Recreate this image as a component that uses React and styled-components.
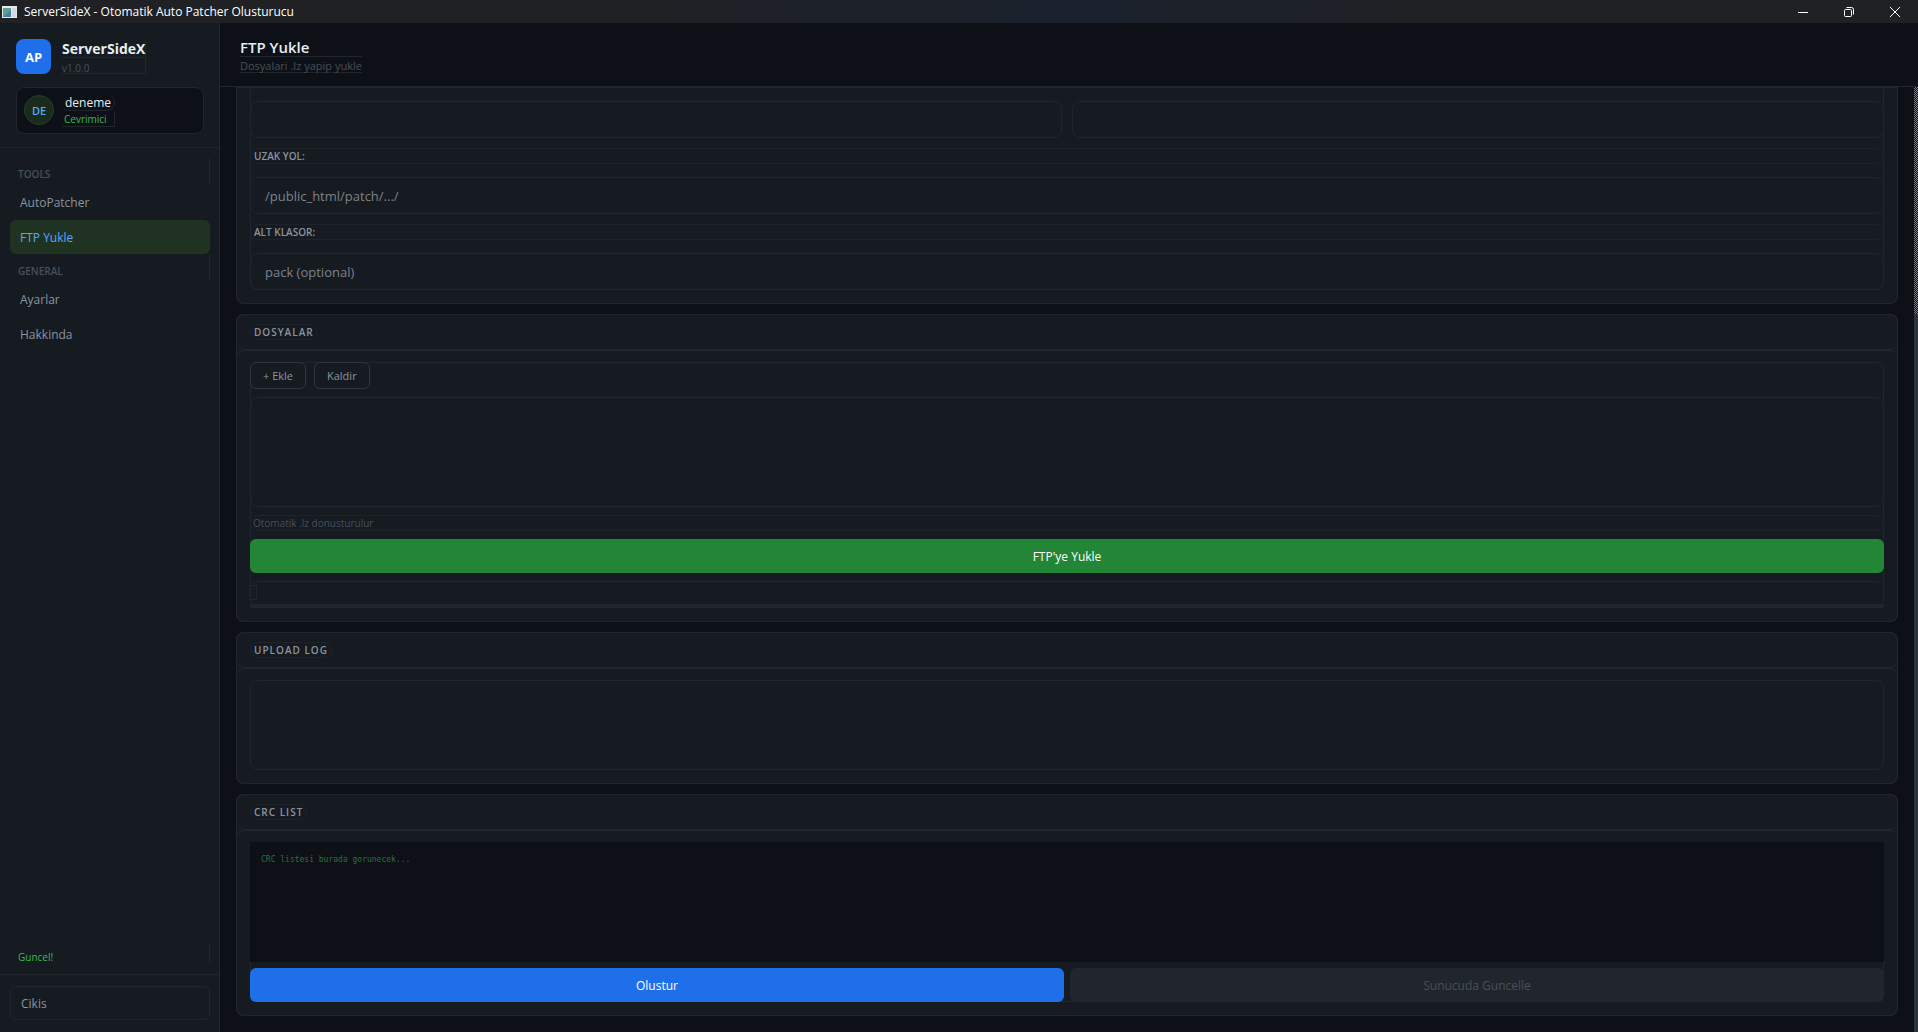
import React, { useState } from "react";
import styled, { createGlobalStyle } from "styled-components";

const line = "#21262d";

export default function App() {
    const [page, setPage] = useState("ftp");

    return (
        <Window>
            <GlobalStyle />
            <TitleBar>
                <AppIcon width="15" height="12" viewBox="0 0 15 12" aria-hidden="true">
                    <rect width="15" height="12" fill="#e6e8ea" />
                    <rect x="1" y="2" width="8" height="9" fill="#5f9f96" />
                    <path d="M1 11 L9 4 V11 Z" fill="#4a7fa5" />
                    <rect x="10" y="2" width="4" height="9" fill="#d5d9dd" />
                </AppIcon>
                <WindowTitle>ServerSideX - Otomatik Auto Patcher Olusturucu</WindowTitle>
                <WindowButton aria-label="Minimize">
                    <svg width="12" height="12" viewBox="0 0 12 12">
                        <path d="M1 6.5H11" />
                    </svg>
                </WindowButton>
                <WindowButton aria-label="Restore">
                    <svg width="12" height="12" viewBox="0 0 12 12">
                        <rect x="1.5" y="3.5" width="7" height="7" rx="1" />
                        <path d="M3.5 1.5H8.5Q10.5 1.5 10.5 3.5V8.5" />
                    </svg>
                </WindowButton>
                <WindowButton aria-label="Close">
                    <svg width="12" height="12" viewBox="0 0 12 12">
                        <path d="M1 1L11 11M11 1L1 11" />
                    </svg>
                </WindowButton>
            </TitleBar>

            <Body>
                <Sidebar>
                    <SidebarTop>
                        <Brand>
                            <Logo>AP</Logo>
                            <BrandText>
                                <BrandName>ServerSideX</BrandName>
                                <Version>v1.0.0</Version>
                            </BrandText>
                        </Brand>
                        <UserCard>
                            <Avatar>DE</Avatar>
                            <div>
                                <UserName>deneme</UserName>
                                <UserStatus>Cevrimici</UserStatus>
                            </div>
                        </UserCard>
                    </SidebarTop>
                    <Nav>
                        <NavTitle>TOOLS</NavTitle>
                        <NavItem $active={page === "patcher"} onClick={() => setPage("patcher")}>AutoPatcher</NavItem>
                        <NavItem $active={page === "ftp"} onClick={() => setPage("ftp")}>FTP Yukle</NavItem>
                        <NavTitle>GENERAL</NavTitle>
                        <NavItem $active={page === "settings"} onClick={() => setPage("settings")}>Ayarlar</NavItem>
                        <NavItem $active={page === "about"} onClick={() => setPage("about")}>Hakkinda</NavItem>
                    </Nav>
                    <UpdateStatus>Guncel!</UpdateStatus>
                    <SidebarBottom>
                        <LogoutButton>Cikis</LogoutButton>
                    </SidebarBottom>
                </Sidebar>

                <Main>
                    <PageHeader>
                        <PageTitle>FTP Yukle</PageTitle>
                        <PageSubtitle>Dosyalari .lz yapip yukle</PageSubtitle>
                    </PageHeader>
                    <ScrollArea>
                        <Content>
                            <Card>
                                <FormBody>
                                    <LabelEdges>
                                        <LabelEdge />
                                        <LabelEdge />
                                    </LabelEdges>
                                    <FormColumns>
                                        <Input type="text" aria-label="Kullanici" />
                                        <Input type="password" aria-label="Sifre" />
                                    </FormColumns>
                                    <FieldLabel htmlFor="remote">UZAK YOL:</FieldLabel>
                                    <Input id="remote" type="text" placeholder="/public_html/patch/.../" />
                                    <FieldLabel htmlFor="folder">ALT KLASOR:</FieldLabel>
                                    <Input id="folder" type="text" placeholder="pack (optional)" />
                                </FormBody>
                            </Card>

                            <Card>
                                <CardHeader><CardTitle>DOSYALAR</CardTitle></CardHeader>
                                <CardBody>
                                    <Stack $gap={8}>
                                        <Toolbar>
                                            <SmallButton>+ Ekle</SmallButton>
                                            <SmallButton>Kaldir</SmallButton>
                                        </Toolbar>
                                        <FileList />
                                        <Hint>Otomatik .lz donusturulur</Hint>
                                        <ActionButton $color="#238636">FTP'ye Yukle</ActionButton>
                                        <ProgressBox>
                                            <ProgressText />
                                            <ProgressBar />
                                        </ProgressBox>
                                    </Stack>
                                </CardBody>
                            </Card>

                            <Card>
                                <CardHeader><CardTitle>UPLOAD LOG</CardTitle></CardHeader>
                                <CardBody>
                                    <LogBox readOnly aria-label="Upload log" />
                                </CardBody>
                            </Card>

                            <Card>
                                <CardHeader><CardTitle>CRC LIST</CardTitle></CardHeader>
                                <CardBody>
                                    <Stack $gap={6}>
                                        <CrcBox readOnly aria-label="CRC list" placeholder="CRC listesi burada gorunecek..." />
                                        <ButtonRow>
                                            <ActionButton $color="#1f6feb">Olustur</ActionButton>
                                            <ActionButton $color={line} disabled>Sunucuda Guncelle</ActionButton>
                                        </ButtonRow>
                                    </Stack>
                                </CardBody>
                            </Card>
                        </Content>
                        <ScrollTrack>
                            <ScrollHandle />
                        </ScrollTrack>
                    </ScrollArea>
                </Main>
            </Body>
        </Window>
    )
}


const GlobalStyle = createGlobalStyle`
    *{
        box-sizing:border-box;
    }
    body{
        margin:0;
        background-color:#0d1117;
    }
    body, button, input, textarea{
        font-family:"Open Sans", "Noto Sans", sans-serif;
    }
    h1, h2, p{
        margin:0;
    }
`;

const Window = styled.div`
    display:flex;
    flex-direction:column;
    height:100vh;
    overflow:hidden;
    color:#e6edf3;
`;

const TitleBar = styled.header`
    display:flex;
    align-items:center;
    flex:none;
    height:23px;
    padding-left:2px;
    background:linear-gradient(90deg, #202124 30%, #1b212d 56%, #202124 77%);
`;

const AppIcon = styled.svg`
    flex:none;
`;

const WindowTitle = styled.span`
    flex:1;
    padding-left:7px;
    font-size:12px;
    line-height:22px;
    color:#ffffff;
`;

const WindowButton = styled.button`
    display:flex;
    align-items:center;
    justify-content:center;
    width:46px;
    height:22px;
    padding:0;
    border:none;
    background:none;
    svg{
        fill:none;
        stroke:#ffffff;
    }
`;

const Body = styled.div`
    display:flex;
    flex:1;
    min-height:0;
`;

const Sidebar = styled.aside`
    display:flex;
    flex-direction:column;
    flex:none;
    width:220px;
    background-color:#161b22;
    border-right:1px solid ${line};
`;

const SidebarTop = styled.div`
    display:flex;
    flex-direction:column;
    gap:13px;
    padding:16px 15px 13px 16px;
    border-bottom:1px solid ${line};
`;

const Brand = styled.div`
    display:flex;
    gap:11px;
`;

const Logo = styled.div`
    width:35px;
    height:35px;
    border-radius:8px;
    background-color:#1f6feb;
    color:#ffffff;
    font-size:13px;
    font-weight:700;
    line-height:36px;
    text-align:center;
`;

const BrandText = styled.div`
    border-right:1px solid ${line};
    border-bottom:1px solid ${line};
`;

const BrandName = styled.div`
    height:19px;
    border-bottom:1px solid ${line};
    font-size:14px;
    font-weight:700;
    line-height:20px;
`;

const Version = styled.div`
    height:15px;
    font-size:10px;
    line-height:20px;
    color:#484f58;
`;

const UserCard = styled.div`
    display:flex;
    gap:8px;
    height:47px;
    padding:7px;
    border:1px solid ${line};
    border-radius:8px;
    background-color:#0d1117;
`;

const Avatar = styled.div`
    width:30px;
    height:30px;
    border:1px solid #24402a;
    border-radius:50%;
    background-color:#1b2b1b;
    color:#58a6ff;
    font-size:11px;
    font-weight:600;
    line-height:30px;
    text-align:center;
`;

const UserName = styled.div`
    height:16px;
    padding:0 3px;
    border-right:1px solid ${line};
    border-bottom:1px solid ${line};
    border-radius:8px;
    font-size:12px;
    font-weight:500;
    line-height:16px;
`;

const UserStatus = styled.div`
    height:16px;
    padding-left:2px;
    border-right:1px solid ${line};
    border-bottom:1px solid ${line};
    font-size:10px;
    line-height:16px;
    color:#3fb950;
`;

const Nav = styled.nav`
    display:flex;
    flex-direction:column;
    gap:1px;
    flex:1;
    padding:10px 9px 0 10px;
`;

const NavTitle = styled.h2`
    height:26px;
    padding:6px 8px 0;
    border-right:1px solid ${line};
    font-size:10px;
    font-weight:600;
    line-height:20px;
    color:#484f58;
`;

const NavItem = styled.button`
    height:34px;
    padding:0 10px;
    border:none;
    border-radius:6px;
    background-color:${props => props.$active ? "#203323" : "transparent"};
    color:${props => props.$active ? "#58a6ff" : "#8b949e"};
    font-size:12px;
    text-align:left;
`;

const UpdateStatus = styled.div`
    height:20px;
    margin:0 9px 10px 10px;
    padding:4px 8px 0;
    border-right:1px solid ${line};
    font-size:10px;
    line-height:18px;
    color:#3fb950;
`;

const SidebarBottom = styled.div`
    padding:11px 9px 12px 10px;
    border-top:1px solid ${line};
`;

const LogoutButton = styled.button`
    width:100%;
    height:34px;
    padding:0 10px;
    border:1px solid ${line};
    border-radius:6px;
    background:none;
    color:#8b949e;
    font-size:12px;
    text-align:left;
`;

const Main = styled.main`
    display:flex;
    flex-direction:column;
    flex:1;
    min-width:0;
    background-color:#0d1117;
`;

const PageHeader = styled.div`
    display:flex;
    flex-direction:column;
    align-items:flex-start;
    flex:none;
    height:64px;
    padding:14px 20px 0;
    border-bottom:1px solid ${line};
`;

const PageTitle = styled.h1`
    height:19px;
    font-size:15px;
    font-weight:600;
    line-height:20px;
`;

const PageSubtitle = styled.p`
    height:17px;
    border-top:1px solid ${line};
    border-bottom:1px solid ${line};
    font-size:11px;
    line-height:17px;
    color:#484f58;
`;

const ScrollArea = styled.div`
    display:flex;
    flex:1;
    min-height:0;
`;

const Content = styled.div`
    display:flex;
    flex-direction:column;
    gap:10px;
    flex:1;
    min-width:0;
    padding:0 16px 16px;
`;

const Card = styled.section`
    flex:none;
    background-color:#161b22;
    box-shadow:inset 0 0 0 1px ${line};
    border-radius:8px;
    &:first-child{
        padding:0 14px 14px;
        border-radius:0 0 8px 8px;
    }
`;

const CardHeader = styled.div`
    display:flex;
    height:36px;
    padding:9px 13px;
    border:1px solid ${line};
    border-radius:8px;
`;

const pill = `
    height:16px;
    padding:0 3px;
    border:1px solid #1e232a;
    border-radius:8px;
    line-height:15px;
`;

const CardTitle = styled.h2`
    ${pill}
    font-size:10px;
    font-weight:600;
    letter-spacing:1px;
    color:#8b949e;
`;

const CardBody = styled.div`
    padding:11px 13px 13px;
    border:1px solid ${line};
    border-radius:8px;
`;

/* the frame is an inset shadow so that the children can sit on top of it */
const FormBody = styled.div`
    display:flex;
    flex-direction:column;
    border-radius:0 0 8px 8px;
    box-shadow:inset 0 0 0 1px ${line};
`;

const FormColumns = styled.div`
    display:grid;
    grid-template-columns:1fr 1fr;
    gap:10px;
`;

/* last pixel row of the labels that are scrolled out of view */
const LabelEdges = styled(FormColumns)`
    align-items:end;
    height:1px;
    margin-bottom:13px;
    overflow:hidden;
`;

const LabelEdge = styled.div`
    height:1px;
    margin:0 7px;
    background-color:${line};
`;

const Input = styled.input`
    width:100%;
    height:37px;
    padding:0 14px;
    border:1px solid ${line};
    border-radius:8px;
    background:none;
    color:#e6edf3;
    font-size:13px;
    &::placeholder{
        color:#7d8289;
    }
`;

const FieldLabel = styled.label`
    ${pill}
    margin:10px 0 13px;
    font-size:10px;
    font-weight:600;
    color:#8b949e;
`;

const Stack = styled.div`
    display:flex;
    flex-direction:column;
    gap:${props => props.$gap}px;
    border-radius:8px;
    box-shadow:inset 0 0 0 1px ${line};
`;

const Toolbar = styled.div`
    display:flex;
    gap:8px;
`;

const SmallButton = styled.button`
    height:27px;
    padding:0 12px;
    border:1px solid #30363d;
    border-radius:6px;
    background-color:#161b22;
    color:#8b949e;
    font-size:11px;
`;

const FileList = styled.div`
    height:110px;
    border:1px solid ${line};
    border-radius:8px;
`;

const Hint = styled.p`
    ${pill}
    padding:0 2px;
    font-size:10px;
    color:#484f58;
`;

const ActionButton = styled.button`
    flex:1 0 auto;
    height:34px;
    border:none;
    border-radius:6px;
    background-color:${props => props.$color};
    color:#ffffff;
    font-size:12px;
    font-weight:500;
    &:disabled{
        color:#484f58;
    }
`;

const ProgressBox = styled.div`
    display:flex;
    flex-direction:column;
    justify-content:space-between;
    height:27px;
    padding-top:3px;
    border-top:1px solid ${line};
    border-radius:8px 8px 0 0;
`;

const ProgressText = styled.span`
    width:7px;
    height:15px;
    border:1px solid ${line};
`;

const ProgressBar = styled.div`
    height:4px;
    border-radius:2px;
    background-color:${line};
`;

const LogBox = styled.textarea`
    display:block;
    width:100%;
    height:90px;
    border:1px solid ${line};
    border-radius:8px;
    background:none;
    color:#8b949e;
    resize:none;
`;

const CrcBox = styled.textarea`
    display:block;
    width:100%;
    height:120px;
    padding:11px;
    border:none;
    background-color:#0d1117;
    color:#3fb950;
    font-family:"DejaVu Sans Mono", monospace;
    font-size:8px;
    line-height:14px;
    resize:none;
    &::placeholder{
        color:#2a7039;
    }
`;

const ButtonRow = styled.div`
    display:grid;
    grid-template-columns:1fr 1fr;
    gap:6px;
`;

const ScrollTrack = styled.div`
    display:flex;
    flex-direction:column;
    justify-content:flex-end;
    width:4px;
    background:repeating-conic-gradient(#7d7f82 0 25%, #0d1117 0 50%) 0 0 / 2px 2px;
`;

const ScrollHandle = styled.div`
    height:76%;
    background-color:#2d333b;
`;
